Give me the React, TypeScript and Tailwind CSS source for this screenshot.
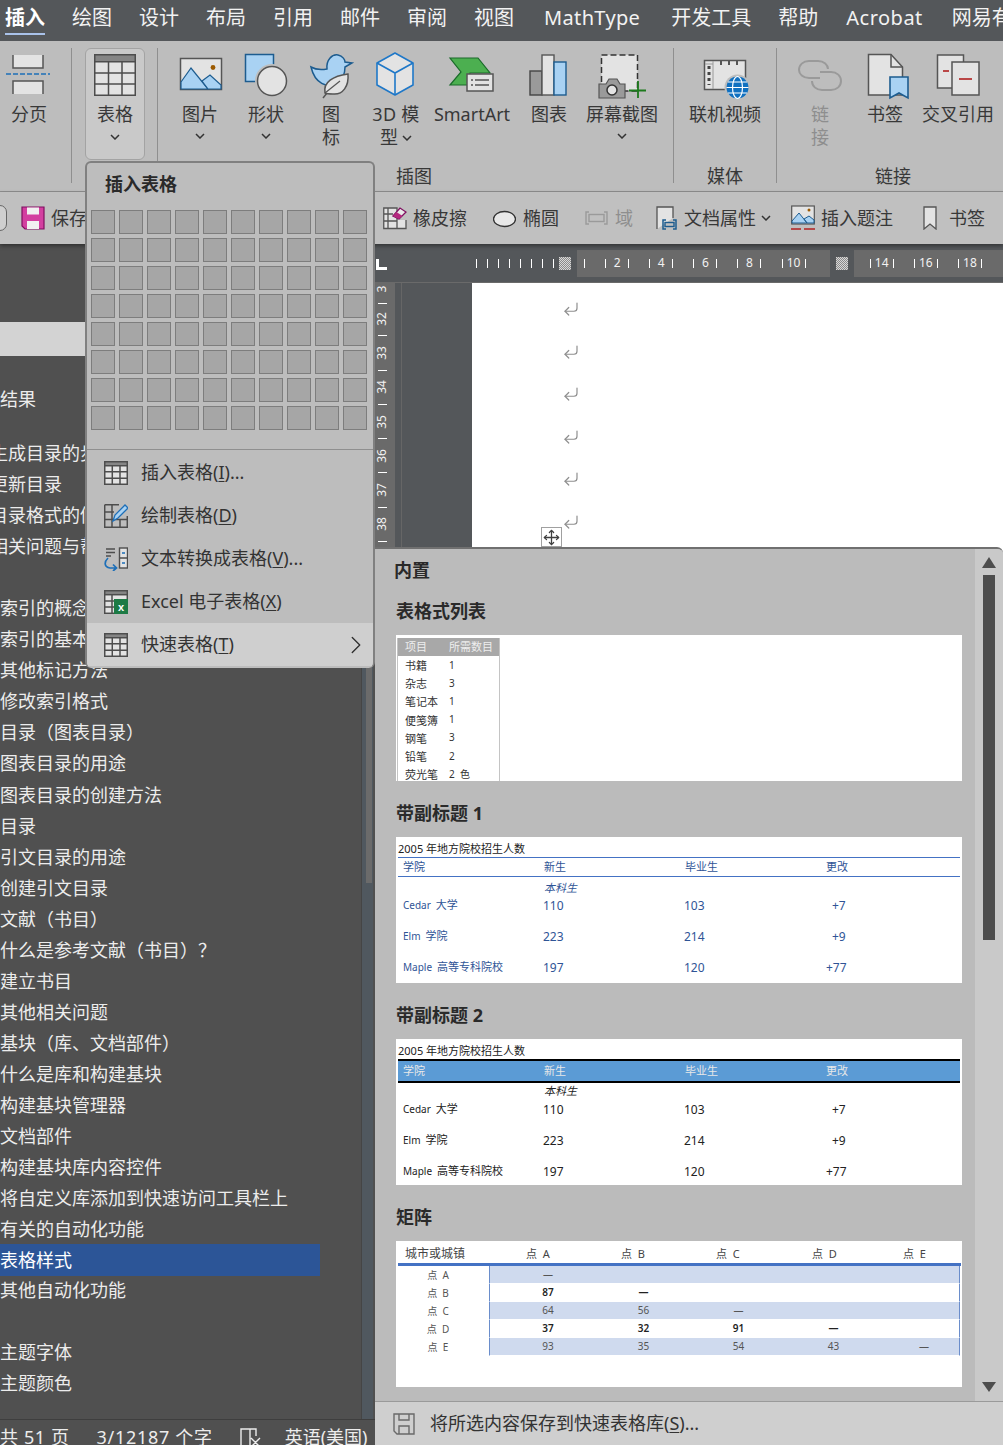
import React from "react";
import { CornerDownLeft, Move, ChevronRight } from "lucide-react";

const L = "#e3e3e3";
const B = "#a9d2f3";
const G = "#555555";
const DB = "#1d5c8f";

function Ic({ children, w = 48, h = 50 }: { children: React.ReactNode; w?: number; h?: number }) {
  return (
    <svg width={w} height={h} viewBox={`0 0 ${w} ${h}`} className="block shrink-0">
      {children}
    </svg>
  );
}

function TableGlyph({ s = 42, sw = 1.5 }: { s?: number; sw?: number }) {
  const t = 42;
  const d = sw / 2;
  return (
    <svg width={s} height={s} viewBox="0 0 42 42" className="block shrink-0">
      <rect x={d} y={d} width={t - sw} height={t - sw} fill={L} stroke="#4d4d4d" strokeWidth={sw} />
      <rect x={d} y={d} width={t - sw} height="7" fill="#858585" stroke="#4d4d4d" strokeWidth={sw} />
      <path d="M14.5 8V41M28 8V41M1 19H41M1 30H41" stroke="#4d4d4d" strokeWidth={sw} fill="none" />
    </svg>
  );
}

const icons: Record<string, React.ReactNode> = {
  page: (
    <Ic>
      <path d="M8 3V16H38V3" fill={L} stroke={G} strokeWidth="1.5" />
      <path d="M1 22H45" stroke="#1d6fb8" strokeWidth="1.5" strokeDasharray="5 2" />
      <path d="M8 42V29H38V42" fill={L} stroke={G} strokeWidth="1.5" />
    </Ic>
  ),
  table: (
    <Ic>
      <g transform="translate(3 2)">
        <TableGlyph />
      </g>
    </Ic>
  ),
  picture: (
    <Ic>
      <rect x="4.5" y="6.5" width="41" height="31" fill={L} stroke={G} strokeWidth="1.5" />
      <path d="M5 30L15 16L32 37H5Z" fill={B} stroke={DB} strokeWidth="1.2" />
      <path d="M26 29L34 23L45 33V37H32Z" fill={B} stroke={DB} strokeWidth="1.2" />
      <circle cx="37" cy="15.5" r="2.4" fill="#9c5a00" />
    </Ic>
  ),
  shape: (
    <Ic>
      <rect x="3.5" y="2.5" width="28" height="27" fill={B} stroke={DB} strokeWidth="1.5" />
      <circle cx="30" cy="29" r="17" fill="#bdbdbd" />
      <circle cx="30" cy="29" r="14.5" fill={L} stroke={G} strokeWidth="1.5" />
    </Ic>
  ),
  icon: (
    <Ic>
      <path
        d="M4 15C9 18 14 18 20 17C19 8 25 2 31 3C36 4 38 8 38 10L45 11L38 15C38 20 37 27 30 32C20 36 8 32 4 15Z"
        fill={B}
        stroke={DB}
        strokeWidth="1.5"
      />
      <path d="M16 46L24 36" stroke={G} strokeWidth="1.5" />
      <path d="M18 41C16 30 26 24 41 22C42 34 36 43 26 42C23 42 20 42 18 41Z" fill={L} stroke={G} strokeWidth="1.5" />
      <path d="M18 41L33 29" stroke={G} strokeWidth="1.2" />
    </Ic>
  ),
  cube: (
    <Ic>
      <path d="M23 1L41 11V33L23 43L5 33V11Z" fill={L} stroke="#1f78c8" strokeWidth="1.6" strokeLinejoin="round" />
      <path d="M5 11L23 21L41 11M23 21V43" fill="none" stroke="#1f78c8" strokeWidth="1.6" />
    </Ic>
  ),
  smart: (
    <Ic>
      <path d="M2 6H30L42 21H22V33H2L13 20Z" fill="#4caf50" stroke="#1a6b2a" strokeWidth="1.2" />
      <rect x="19" y="22" width="26" height="17" fill={L} stroke={G} strokeWidth="1.5" />
      <path d="M27 28H41M27 33H41" stroke={G} strokeWidth="1.4" />
      <path d="M23 28H25M23 33H25" stroke={G} strokeWidth="1.4" />
    </Ic>
  ),
  chart: (
    <Ic>
      <rect x="5" y="19" width="12" height="24" fill="#9a9a9a" stroke="#444" strokeWidth="1.4" />
      <rect x="17" y="3" width="12" height="40" fill={L} stroke={G} strokeWidth="1.4" />
      <rect x="29" y="10" width="12" height="33" fill={B} stroke={DB} strokeWidth="1.4" />
    </Ic>
  ),
  shot: (
    <Ic>
      <rect x="3.5" y="3" width="36" height="36" fill={L} stroke="#333" strokeWidth="1.5" strokeDasharray="6 3" />
      <path d="M1 32H8L11 27H19L22 32H27V46H1Z" fill="#9a9a9a" stroke={G} strokeWidth="1.2" />
      <circle cx="14" cy="38" r="5" fill={L} stroke="#333" strokeWidth="1.5" />
      <path d="M40 29V46M31 38.5H48" stroke="#1d7a1d" strokeWidth="1.8" />
    </Ic>
  ),
  video: (
    <Ic>
      <rect x="3.5" y="8.5" width="41" height="29" fill={L} stroke={G} strokeWidth="1.5" />
      <path d="M12 9V37M4 12H12" stroke="#9a9a9a" strokeWidth="1" />
      <path d="M8 14V33" stroke="#444" strokeWidth="3" strokeDasharray="3 3" />
      <path d="M36 9V13M20 9V13M28 9V13" stroke={G} strokeWidth="2" />
      <circle cx="36.5" cy="35.5" r="13" fill="#bdbdbd" />
      <circle cx="36.5" cy="35.5" r="11" fill="#1070c0" />
      <path d="M25.5 35.5H47.5M27 30H46M27 41H46" stroke="#fff" strokeWidth="1.2" />
      <ellipse cx="36.5" cy="35.5" rx="5" ry="11" fill="none" stroke="#fff" strokeWidth="1.2" />
    </Ic>
  ),
  link: (
    <Ic>
      <path d="M24 26H13C7 26 3 22 3 18C3 13 7 9 13 9H22C28 9 32 13 32 17" fill="none" stroke="#9a9a9a" strokeWidth="2" />
      <path d="M24 20H35C41 20 45 24 45 29C45 34 41 38 35 38H26C20 38 16 34 16 29" fill="none" stroke="#9a9a9a" strokeWidth="2" />
    </Ic>
  ),
  bookmark: (
    <Ic>
      <path d="M7.5 2.5H30L41.5 15V43H7.5Z" fill={L} stroke={G} strokeWidth="1.5" />
      <path d="M30 2.5V15H41.5" fill="none" stroke={G} strokeWidth="1.5" />
      <path d="M29 25H47V46L38 41L29 46Z" fill={B} stroke={DB} strokeWidth="1.6" />
    </Ic>
  ),
  cross: (
    <Ic>
      <rect x="3.5" y="3" width="26" height="33" fill={L} stroke={G} strokeWidth="1.5" />
      <path d="M9 19H15" stroke="#b02020" strokeWidth="1.6" />
      <rect x="18" y="10" width="27" height="33" fill={L} stroke={G} strokeWidth="1.5" />
      <path d="M25 27H38" stroke="#b02020" strokeWidth="1.6" />
    </Ic>
  ),
};

function Chev({ color = "#333" }: { color?: string }) {
  return (
    <svg width="10" height="6" viewBox="0 0 10 6" className="inline-block">
      <path d="M1 1L5 5L9 1" fill="none" stroke={color} strokeWidth="1.5" />
    </svg>
  );
}

function RItem({
  w,
  icon,
  lines,
  chev,
  muted,
}: {
  w: string;
  icon: string;
  lines: React.ReactNode[];
  chev?: boolean;
  muted?: boolean;
}) {
  return (
    <div className={`${w} shrink-0 flex flex-col items-center pt-[4px]`}>
      {icons[icon]}
      <div className={`mt-[1px] text-center text-[18px] leading-[23px] whitespace-nowrap ${muted ? "text-[#8e8e8e]" : "text-[#383838]"}`}>
        {lines.map((l, i) => (
          <div key={i}>{l}</div>
        ))}
      </div>
      {chev && (
        <div className="h-[20px] flex items-center">
          <Chev />
        </div>
      )}
    </div>
  );
}

function Sep({ ml }: { ml: string }) {
  return <div className={`${ml} w-px h-[135px] bg-[#8f8f8f] shrink-0`} />;
}

function GroupLabel({ children }: { children: React.ReactNode }) {
  return <div className="text-center text-[18px] leading-[23px] text-[#383838] mt-auto">{children}</div>;
}

const tabs = ["绘图", "设计", "布局", "引用", "邮件", "审阅", "视图"];

function TopTabs() {
  return (
    <div className="h-[41px] bg-[#54575a] flex items-start pl-[5px] gap-[27px] text-[20px] leading-[36px] text-[#f2f2f2] whitespace-nowrap overflow-hidden">
      <div className="relative font-bold text-white h-[36px]">
        插入
        <div className="absolute left-0 right-0 top-[33px] h-[2px] bg-[#a9c2ea]" />
      </div>
      {tabs.map((t) => (
        <div key={t}>{t}</div>
      ))}
      <div className="ml-[3px] tracking-[0.35px]">MathType</div>
      <div className="ml-[4px]">开发工具</div>
      <div>帮助</div>
      <div className="ml-[1px] tracking-[0.5px]">Acrobat</div>
      <div className="ml-[2px]">网易有道翻译</div>
    </div>
  );
}

function Ribbon() {
  return (
    <div className="h-[151px] bg-[#bdbdbd] border-b border-[#8f8f8f] pt-[7px] flex items-start shrink-0">
      <RItem w="w-[58px]" icon="page" lines={["分页"]} />
      <Sep ml="ml-[13px]" />
      <div className="ml-[13px] w-[60px] h-[112px] rounded-md border border-[#a3a3a3] bg-[#c9c9c9] shrink-0 flex flex-col items-center pt-[3px]">
        {icons.table}
        <div className="mt-[1px] text-[18px] leading-[23px] text-[#383838]">表格</div>
        <div className="h-[21px] flex items-center">
          <Chev />
        </div>
      </div>
      <Sep ml="ml-[12px]" />
      <div className="ml-[9px] flex flex-col w-[494px] h-[140px] shrink-0">
        <div className="flex">
          <RItem w="w-[66px]" icon="picture" lines={["图片"]} chev />
          <RItem w="w-[66px]" icon="shape" lines={["形状"]} chev />
          <RItem w="w-[64px]" icon="icon" lines={["图", "标"]} />
          <RItem
            w="w-[66px]"
            icon="cube"
            lines={[
              <span key="a" className="tracking-[0.3px]">3D 模</span>,
              <span key="x" className="inline-flex items-center gap-[4px]">
                型 <Chev />
              </span>,
            ]}
          />
          <RItem w="w-[86px]" icon="smart" lines={["SmartArt"]} />
          <RItem w="w-[68px]" icon="chart" lines={["图表"]} />
          <RItem w="w-[78px]" icon="shot" lines={["屏幕截图"]} chev />
        </div>
        <GroupLabel>插图</GroupLabel>
      </div>
      <Sep ml="ml-[12px]" />
      <div className="ml-[11px] flex flex-col w-[80px] h-[140px] shrink-0">
        <RItem w="w-[80px]" icon="video" lines={["联机视频"]} />
        <GroupLabel>媒体</GroupLabel>
      </div>
      <Sep ml="ml-[11px]" />
      <div className="ml-[13px] flex flex-col w-[206px] h-[140px] shrink-0">
        <div className="flex">
          <RItem w="w-[60px]" icon="link" lines={["链", "接"]} muted />
          <RItem w="w-[70px]" icon="bookmark" lines={["书签"]} />
          <RItem w="w-[76px]" icon="cross" lines={["交叉引用"]} />
        </div>
        <GroupLabel>链接</GroupLabel>
      </div>
    </div>
  );
}

function QuickBar() {
  return (
    <div className="h-[52px] bg-[#c0c0c0] flex items-center text-[18px] text-[#383838] whitespace-nowrap shadow-[0_2px_4px_rgba(0,0,0,0.4)] relative z-10 shrink-0">
      <div className="w-[383px] shrink-0 flex items-center overflow-hidden">
        <div className="w-[14px] h-[26px] -ml-[7px] rounded-full border border-[#666] bg-[#cfcfcf]" />
        <svg width="24" height="24" viewBox="0 0 24 24" className="ml-[14px] shrink-0">
          <path d="M1 1H23V23H4L1 20Z" fill="#d33fa0" stroke="#7f0f60" strokeWidth="1.2" />
          <rect x="6" y="1.5" width="12" height="7" fill="#f1f1f1" />
          <rect x="6" y="15" width="12" height="8" fill="#f1f1f1" />
        </svg>
        <span className="ml-[6px]">保存</span>
      </div>
      <svg width="24" height="24" viewBox="0 0 24 24" className="shrink-0">
        <path d="M0.75 2H14V22.5H0.75ZM14 14V22.5H23V14M5 2V22.5M1 8H10M1 15H14" fill={L} stroke={G} strokeWidth="1.3" />
        <path d="M10 10L17 2L23 6L16 13Z" fill="#e9e9e9" stroke="#7f0f60" strokeWidth="1.3" />
        <path d="M10 10L13.5 6L19.5 10L16 13Z" fill="#b5287f" />
      </svg>
      <span className="ml-[6px]">橡皮擦</span>
      <svg width="23" height="24" viewBox="0 0 23 24" className="ml-[26px] shrink-0">
        <ellipse cx="11.5" cy="13" rx="11" ry="7.5" fill="#e8e8e8" stroke="#333" strokeWidth="1.3" />
      </svg>
      <span className="ml-[7px]">椭圆</span>
      <svg width="23" height="24" viewBox="0 0 23 24" className="ml-[26px] shrink-0">
        <path d="M4 6H1V18H4M19 6H22V18H19" fill="none" stroke="#9a9a9a" strokeWidth="1.4" />
        <rect x="4" y="8.5" width="15" height="7" fill="none" stroke="#9a9a9a" strokeWidth="1.4" />
      </svg>
      <span className="ml-[7px] text-[#8e8e8e]">域</span>
      <svg width="21" height="24" viewBox="0 0 21 24" className="ml-[23px] shrink-0">
        <path d="M1 23V1H17V12" fill={L} stroke={G} strokeWidth="1.3" />
        <path d="M10 14H7V23H10M17 14H20V23H17" fill="none" stroke="#1d5c8f" strokeWidth="1.5" />
        <rect x="9" y="16.5" width="9" height="4" fill="none" stroke="#1d5c8f" strokeWidth="1.4" />
      </svg>
      <span className="ml-[7px]">文档属性</span>
      <span className="ml-[5px] w-[10px] flex items-center">
        <Chev />
      </span>
      <svg width="24" height="26" viewBox="0 0 24 26" className="ml-[20px] shrink-0">
        <rect x="0.7" y="1" width="22.6" height="18" fill={L} stroke={G} strokeWidth="1.2" />
        <path d="M1 16L8 8L16 18H1ZM13 14L18 11L23 15V18H16Z" fill={B} stroke={DB} strokeWidth="1" />
        <circle cx="18" cy="5" r="1.5" fill="#9c5a00" />
        <path d="M0 24H10M13 24H24" stroke="#b02020" strokeWidth="1.6" />
      </svg>
      <span className="ml-[6px]">插入题注</span>
      <svg width="14" height="24" viewBox="0 0 14 24" className="ml-[30px] shrink-0">
        <path d="M1 1H13V23L7 18L1 23Z" fill={L} stroke={G} strokeWidth="1.3" />
      </svg>
      <span className="ml-[12px]">书签</span>
    </div>
  );
}

const listTop = ["生成目录的步骤", "更新目录", "目录格式的修改", "相关问题与帮助"];
const list2 = [
  "索引的概念",
  "索引的基本",
  "其他标记方法",
  "修改索引格式",
  "目录（图表目录）",
  "图表目录的用途",
  "图表目录的创建方法",
  "目录",
  "引文目录的用途",
  "创建引文目录",
  "文献（书目）",
  "什么是参考文献（书目）？",
  "建立书目",
  "其他相关问题",
  "基块（库、文档部件）",
  "什么是库和构建基块",
  "构建基块管理器",
  "文档部件",
  "构建基块库内容控件",
  "将自定义库添加到快速访问工具栏上",
  "有关的自动化功能",
];

function Row({ children, clip, active }: { children: React.ReactNode; clip?: boolean; active?: boolean }) {
  return (
    <div className="h-[31.05px] leading-[31px] w-[362px] whitespace-nowrap">
      {active ? (
        <div className="w-[320px] h-[32px] -mt-[1px] leading-[32px] bg-[#2c5597] text-white">{children}</div>
      ) : (
        <div className={clip ? "-ml-[10px]" : ""}>{children}</div>
      )}
    </div>
  );
}

function Sidebar() {
  return (
    <div className="w-[375px] shrink-0 h-full flex flex-col overflow-hidden bg-[#505050]">
      <div className="flex flex-1 min-h-0">
        <div className="w-[362px] shrink-0 border-r border-[#454545] text-[18px] text-[#ececec] overflow-hidden">
          <div className="h-[34px] mt-[78px] bg-[#d3d3d3]" />
          <div className="mt-[28px]">
            <Row>结果</Row>
            <div className="h-[23px]" />
            {listTop.map((t) => (
              <Row key={t} clip>
                {t}
              </Row>
            ))}
            <div className="h-[31px]" />
            {list2.map((t) => (
              <Row key={t}>{t}</Row>
            ))}
            <Row active>表格样式</Row>
            <Row>其他自动化功能</Row>
            <div className="h-[31px]" />
            <Row>主题字体</Row>
            <Row>主题颜色</Row>
          </div>
        </div>
        <div className="w-[11px] bg-[#50585f] shrink-0 pl-[4px]">
          <div className="w-[6px] h-[639px] bg-[#6b6b6b]" />
        </div>
      </div>
      <div className="h-[26px] shrink-0 border-t border-[#3e3e3e] flex items-start text-[18px] leading-[34px] text-[#ececec] whitespace-nowrap overflow-hidden">
        <span className="tracking-[0.6px]">共 51 页</span>
        <span className="ml-[27px] tracking-[0.7px]">3/12187 个字</span>
        <svg width="22" height="20" viewBox="0 0 22 20" className="ml-[27px] mt-[8px] shrink-0">
          <path d="M1 1H10V18H1ZM10 1H16V8M11 10L20 19M20 10L11 19" fill="none" stroke="#ececec" strokeWidth="1.4" />
        </svg>
        <span className="ml-[23px]">英语(美国)</span>
      </div>
    </div>
  );
}

function HRuler() {
  const Tick = ({ h = "h-[9px]" }: { h?: string }) => <div className={`w-px ${h} bg-white`} />;
  const nums: (string | null)[] = [null, "2", "4", "6", "8", "10", null, "14", "16", "18"];
  const Block = () => (
    <div className="w-[12px] h-[13px] bg-[repeating-conic-gradient(#8a8a8a_0_25%,#d8d8d8_0_50%)] bg-[length:2px_2px]" />
  );
  return (
    <div className="h-[38px] bg-[#54575a] flex items-center relative shrink-0">
      <div className="w-[11px] h-[11px] ml-[1px] border-l-[3px] border-b-[3px] border-white self-end mb-[12px] shrink-0" />
      <div className="ml-[89px] flex items-center gap-[10px] h-[27px] shrink-0">
        {[0, 1, 2, 3, 4, 5, 6, 7].map((i) => (
          <Tick key={i} />
        ))}
      </div>
      <div className="ml-[5px] shrink-0">
        <Block />
      </div>
      <div className="ml-[6px] flex-1 h-[27px] bg-[#6a6a6a] flex items-center overflow-hidden">
        <div className="flex items-center -ml-[26px]">
          {nums.map((n, i) =>
            i === 6 ? (
              <div key={i} className="w-[44.1px] shrink-0 h-[27px] flex items-center justify-center">
                <div className="w-[24px] h-[27px] translate-x-[4px] bg-[#54575a] flex items-center justify-center">
                  <Block />
                </div>
              </div>
            ) : (
              <div key={i} className="w-[44.1px] shrink-0 flex items-center justify-center gap-[4px] text-[12px] text-[#f2f2f2]">
                <Tick />
                <span className="w-[14px] text-center">{n}</span>
                <Tick />
              </div>
            )
          )}
        </div>
      </div>
    </div>
  );
}

function VRuler() {
  const nums = ["3", "32", "33", "34", "35", "36", "37", "38"];
  return (
    <div className="w-[20px] shrink-0 bg-[#6a6a6a] flex flex-col items-center overflow-hidden pr-[6px]">
      {nums.map((n, i) => (
        <div key={n} className={`${i === 0 ? "h-[19px]" : "h-[34.3px]"} shrink-0 w-full flex flex-col items-center`}>
          <div className={`flex-1 flex items-center justify-center ${i === 0 ? "pb-[8px]" : ""}`}>
            <div className="-rotate-90 text-[12px] leading-none text-[#f2f2f2] whitespace-nowrap">{n}</div>
          </div>
          <div className="w-[9px] h-px bg-white shrink-0" />
        </div>
      ))}
    </div>
  );
}

function DocArea() {
  return (
    <div className="flex-1 min-w-0 flex flex-col bg-[#54575a]">
      <HRuler />
      <div className="flex flex-1 border-t border-[#6a6a6a]">
        <VRuler />
        <div className="w-[6px] shrink-0" />
        <div className="w-[71px] shrink-0 border-l border-[#666]" />
        <div className="flex-1 bg-white pt-[17px] pl-[90px] flex flex-col">
          {[0, 1, 2, 3, 4, 5].map((i) => (
            <div key={i} className="h-[42.6px] shrink-0 text-[#8f8f8f]">
              <CornerDownLeft size={18} strokeWidth={1.6} />
            </div>
          ))}
        </div>
      </div>
    </div>
  );
}

function MenuIcon({ kind }: { kind: string }) {
  if (kind === "table")
    return (
      <div className="w-[24px]">
        <TableGlyph s={24} sw={2.6} />
      </div>
    );
  if (kind === "draw")
    return (
      <svg width="24" height="24" viewBox="0 0 24 24" className="shrink-0">
        <path d="M0.7 0.7H15M0.7 0.7V23.3H23.3V12M0.7 8H10M0.7 15.5H23M8 1V23M16 15V23" fill="none" stroke="#4d4d4d" strokeWidth="1.5" />
        <path d="M9 17L11 11L21 1L24 4L14 14Z" fill="#a9d2f3" stroke="#1d6fb8" strokeWidth="1.3" />
      </svg>
    );
  if (kind === "convert")
    return (
      <svg width="24" height="24" viewBox="0 0 24 24" className="shrink-0">
        <path d="M2 2H11M2 5.5H11M2 9H7" stroke="#4d4d4d" strokeWidth="1.4" />
        <rect x="15.5" y="1" width="8" height="20" fill={L} stroke="#4d4d4d" strokeWidth="1.4" />
        <path d="M15.5 11H23.5" stroke="#4d4d4d" strokeWidth="1.4" />
        <path d="M18 6H21M18 16H21" stroke="#1d6fb8" strokeWidth="1.4" />
        <path d="M4 11C0 15 0 20 6 21H12M9 17.5L12.5 21L9 24" fill="none" stroke="#1d6fb8" strokeWidth="1.7" />
      </svg>
    );
  return (
    <svg width="24" height="24" viewBox="0 0 24 24" className="shrink-0">
      <rect x="0.7" y="0.7" width="22.6" height="22.6" fill={L} stroke="#4d4d4d" strokeWidth="1.5" />
      <rect x="0.7" y="0.7" width="22.6" height="4" fill="#858585" stroke="#4d4d4d" strokeWidth="1.5" />
      <path d="M8 5V23M1 11H23M1 17H23" stroke="#4d4d4d" strokeWidth="1.5" />
      <rect x="10" y="9" width="14" height="15" fill="#1d7a45" />
      <text x="17" y="21" fontSize="11" fontWeight="700" fill="#fff" textAnchor="middle" fontFamily="Liberation Sans">x</text>
    </svg>
  );
}

function U({ children }: { children: React.ReactNode }) {
  return <span className="underline underline-offset-2">{children}</span>;
}

function InsertMenu() {
  const cells = Array.from({ length: 80 });
  const items: [string, React.ReactNode][] = [
    ["table", <>插入表格(<U>I</U>)...</>],
    ["draw", <>绘制表格(<U>D</U>)</>],
    ["convert", <>文本转换成表格(<U>V</U>)...</>],
    ["excel", <>Excel 电子表格(<U>X</U>)</>],
  ];
  return (
    <div className="absolute left-[85px] top-[161px] w-[290px] h-[507px] bg-[#bdbdbd] border-2 border-[#808080] border-b-0 rounded-t-md rounded-b-md z-20 overflow-hidden">
      <div className="h-[47px] pl-[18px] font-bold text-[18px] leading-[42px] text-[#2a2a2a]">插入表格</div>
      <div className="grid grid-cols-[repeat(10,24px)] gap-[4px] pl-[4px]">
        {cells.map((_, i) => (
          <div key={i} className="h-[24px] bg-[#a6a6a6] border border-[#7d7d7d]" />
        ))}
      </div>
      <div className="h-px bg-[#8f8f8f] mt-[19px]" />
      <div className="flex flex-col text-[18px] text-[#333] pt-[1px]">
        {items.map(([k, t], i) => (
          <div key={i} className="h-[43px] flex items-center pl-[17px] gap-[13px] whitespace-nowrap">
            <MenuIcon kind={k} />
            <span>{t}</span>
          </div>
        ))}
        <div className="h-[43px] flex items-center pl-[17px] gap-[13px] bg-[#cfcfcf] whitespace-nowrap">
          <MenuIcon kind="table" />
          <span className="flex-1">快速表格(<U>T</U>)</span>
          <ChevronRight size={30} strokeWidth={1.1} className="mr-[2px] text-[#333]" />
        </div>
      </div>
    </div>
  );
}

function SecTitle({ children, cls }: { children: React.ReactNode; cls: string }) {
  return <div className={`font-bold text-[18px] leading-[24px] text-[#2a2a2a] ${cls}`}>{children}</div>;
}

function PreviewList() {
  const rows = [
    ["书籍", "1"],
    ["杂志", "3"],
    ["笔记本", "1"],
    ["便笺簿", "1"],
    ["钢笔", "3"],
    ["铅笔", "2"],
    ["荧光笔", "2  色"],
  ];
  return (
    <div className="h-[146px] bg-white pl-[1px] pt-[3px] overflow-hidden">
      <div className="w-[103px] h-[143px] border-r border-l border-[#c4c4c4] text-[11px] text-[#333]">
        <div className="h-[18px] bg-[#a8a8a8] text-[#eeeeee] flex items-center pl-[7px] leading-[18px]">
          <span className="w-[44px]">项目</span>
          <span>所需数目</span>
        </div>
        <div className="pt-[1px]">
          {rows.map(([a, b]) => (
            <div key={a} className="h-[18.2px] flex items-center pl-[7px] leading-[18px]">
              <span className="w-[44px]">{a}</span>
              <span className="text-[10px] whitespace-pre -mt-[3px]">{b}</span>
            </div>
          ))}
        </div>
      </div>
    </div>
  );
}

function PreviewCols({ a, b, c, d, cls }: { a: React.ReactNode; b: React.ReactNode; c: React.ReactNode; d: React.ReactNode; cls?: string }) {
  return (
    <div className={`grid grid-cols-[140px_141px_141px_60px] pl-[6px] items-center ${cls ?? ""}`}>
      <div>{a}</div>
      <div>{b}</div>
      <div>{c}</div>
      <div>{d}</div>
    </div>
  );
}

const colleges: [string, string, string, string, string][] = [
  ["Cedar", "大学", "110", "103", "+7"],
  ["Elm", "学院", "223", "214", "+9"],
  ["Maple", "高等专科院校", "197", "120", "+77"],
];

function Num({ children }: { children: React.ReactNode }) {
  return <span className="text-[12px] -ml-[1px]">{children}</span>;
}

function Delta({ children }: { children: string }) {
  const pad = children.length > 2 ? "" : "pl-[6px]";
  return <span className={`text-[12px] ${pad}`}>{children}</span>;
}

function College({ a, b }: { a: string; b: string }) {
  return (
    <span className="-ml-[1px]">
      <span className="text-[10px]">{a}</span>
      <span className="ml-[5px]">{b}</span>
    </span>
  );
}

function PreviewBlue() {
  return (
    <div className="h-[146px] bg-white pt-[4px] px-[2px] text-[11px] text-[#2f5496] whitespace-pre overflow-hidden">
      <div className="h-[16px] leading-[16px] text-[#222]">2005 年地方院校招生人数</div>
      <div className="border-t border-[#4472c4]">
        <PreviewCols cls="h-[19px] border-b border-[#4472c4]" a={<span className="-ml-[1px]">学院</span>} b="新生" c="毕业生" d="更改" />
      </div>
      <PreviewCols cls="h-[22px] italic" a="" b="本科生" c="" d="" />
      <div className="-mt-[9px]">
        {colleges.map(([a, a2, b, c, d]) => (
          <PreviewCols key={a} cls="h-[31px]" a={<College a={a} b={a2} />} b={<Num>{b}</Num>} c={<Num>{c}</Num>} d={<Delta>{d}</Delta>} />
        ))}
      </div>
    </div>
  );
}

function PreviewDark() {
  return (
    <div className="h-[146px] bg-white pt-[4px] px-[2px] text-[11px] text-[#222] whitespace-pre overflow-hidden">
      <div className="h-[16px] leading-[16px]">2005 年地方院校招生人数</div>
      <div className="border-t-2 border-b-2 border-black">
        <PreviewCols cls="h-[20px] bg-[#5b9bd5] text-[#e8e8e8]" a={<span className="-ml-[1px]">学院</span>} b="新生" c="毕业生" d="更改" />
      </div>
      <PreviewCols cls="h-[16px] italic" a="" b="本科生" c="" d="" />
      <div className="-mt-[5px]">
        {colleges.map(([a, a2, b, c, d]) => (
          <PreviewCols key={a} cls="h-[31px]" a={<College a={a} b={a2} />} b={<Num>{b}</Num>} c={<Num>{c}</Num>} d={<Delta>{d}</Delta>} />
        ))}
      </div>
    </div>
  );
}

function PreviewMatrix() {
  const rows = [
    ["点  A", "—", "", "", "", ""],
    ["点  B", "87", "—", "", "", ""],
    ["点  C", "64", "56", "—", "", ""],
    ["点  D", "37", "32", "91", "—", ""],
    ["点  E", "93", "35", "54", "43", "—"],
  ];
  const heads = ["点  A", "点  B", "点  C", "点  D", "点  E"];
  const headW = ["ml-[36px] w-[95px]", "w-[95px]", "w-[96px]", "w-[91px]", "w-[50px]"];
  return (
    <div className="h-[146px] bg-white pt-[4px] px-[2px] whitespace-pre overflow-hidden">
      <div className="flex h-[18px] items-center text-[12px] text-[#444]">
        <span className="w-[92px] pl-[7px]">城市或城镇</span>
        {heads.map((h, i) => (
          <span key={h} className={`text-[11px] ${headW[i]}`}>
            {h}
          </span>
        ))}
      </div>
      <div className="w-[563px] h-[3px] bg-[#4472c4]" />
      {rows.map((r, i) => (
        <div key={i} className={`flex h-[18px] w-[562px] items-center text-[10px] ${i % 2 === 0 ? "text-[#555]" : "font-semibold text-[#222]"}`}>
          <div className="w-[92px] text-center pr-[11px] bg-white text-[#555] font-normal h-full leading-[18px]">{r[0]}</div>
          <div className={`flex-1 h-full flex items-center border-l border-r border-[#6a8dcb] border-b border-b-white ${i % 2 === 0 ? "bg-[#cfdaee]" : "bg-white"}`}>
            <span className="ml-[10px] w-[96px] text-center">{r[1]}</span>
            <span className="w-[95px] text-center">{r[2]}</span>
            <span className="w-[95px] text-center">{r[3]}</span>
            <span className="w-[95px] text-center">{r[4]}</span>
            <span className="ml-[8px] w-[70px] text-center">{r[5]}</span>
          </div>
        </div>
      ))}
    </div>
  );
}

function Gallery() {
  return (
    <div className="absolute left-[375px] top-[547px] w-[628px] h-[898px] bg-[#bbbbbb] border-t-2 border-[#707070] rounded-tr-md z-30 flex flex-col overflow-hidden">
      <div className="flex flex-1 min-h-0">
        <div className="flex-1 min-w-0 pl-[21px] pr-[13px]">
          <SecTitle cls="pt-[9px] h-[33px] -ml-[2px]">内置</SecTitle>
          <SecTitle cls="pt-[17px] h-[53px]">表格式列表</SecTitle>
          <PreviewList />
          <SecTitle cls="pt-[20px] h-[56px]">带副标题 1</SecTitle>
          <PreviewBlue />
          <SecTitle cls="pt-[20px] h-[56px]">带副标题 2</SecTitle>
          <PreviewDark />
          <SecTitle cls="pt-[20px] h-[56px]">矩阵</SecTitle>
          <PreviewMatrix />
        </div>
        <div className="w-[28px] shrink-0 bg-[#c9c9c9] flex flex-col items-center">
          <svg width="14" height="11" viewBox="0 0 14 11" className="mt-[8px] shrink-0">
            <path d="M7 0L14 11H0Z" fill="#4d4d4d" />
          </svg>
          <div className="w-[12px] h-[365px] bg-[#4d4d4d] mt-[7px]" />
          <svg width="14" height="10" viewBox="0 0 14 10" className="mt-auto mb-[9px] shrink-0">
            <path d="M0 0H14L7 10Z" fill="#4d4d4d" />
          </svg>
        </div>
      </div>
      <div className="h-[44px] shrink-0 bg-[#cfcfcf] border-t border-[#9a9a9a] flex items-center pl-[18px] text-[18px] text-[#333] whitespace-nowrap">
        <svg width="22" height="22" viewBox="0 0 22 22" className="shrink-0">
          <path d="M1 1H21V21H4L1 18Z" fill="none" stroke="#6a6a6a" strokeWidth="1.4" />
          <path d="M6 1V7H16V1M6 21V13H16V21" fill="none" stroke="#6a6a6a" strokeWidth="1.4" />
        </svg>
        <span className="ml-[15px]">将所选内容保存到快速表格库(<U>S</U>)...</span>
      </div>
    </div>
  );
}

export default function App() {
  return (
    <div className="relative w-[1003px] h-[1445px] overflow-hidden bg-[#505050] flex flex-col font-['Noto_Sans','Noto_Sans_CJK_SC',sans-serif]">
      <TopTabs />
      <Ribbon />
      <QuickBar />
      <div className="flex flex-1 min-h-0">
        <Sidebar />
        <DocArea />
      </div>
      <InsertMenu />
      <div className="absolute left-[541px] top-[527px] w-[21px] h-[20px] bg-white border border-[#a0a0a0] flex items-center justify-center z-10">
        <Move size={17} strokeWidth={1.8} className="text-[#3f3f3f]" />
      </div>
      <Gallery />
    </div>
  );
}
